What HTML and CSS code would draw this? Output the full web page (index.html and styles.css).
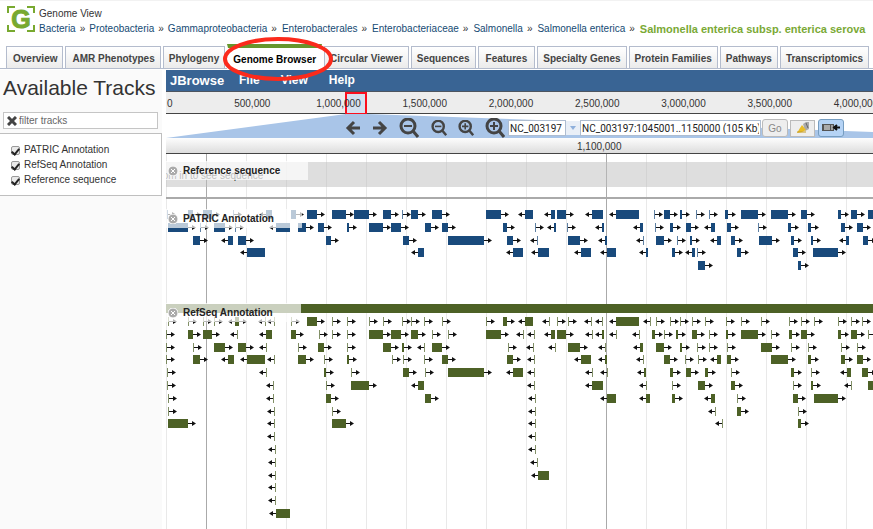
FILE: index.html
```html
<!DOCTYPE html>
<html lang="en">
<head>
<meta charset="utf-8">
<title>Genome View</title>
<link rel="stylesheet" href="styles.css">
</head>
<body>
<header class="page-header">
  <svg class="logo" viewBox="0 0 28 26" aria-hidden="true">
    <path d="M1 7V1h7M20 1h7v6M27 19v6h-7M8 25H1v-6"/>
    <text x="14" y="22">G</text>
  </svg>
  <div class="heading">
    <div class="view-name">Genome View</div>
    <nav class="crumbs"><a href="#">Bacteria</a><i>»</i><a href="#">Proteobacteria</a><i>»</i><a href="#">Gammaproteobacteria</a><i>»</i><a href="#">Enterobacterales</a><i>»</i><a href="#">Enterobacteriaceae</a><i>»</i><a href="#">Salmonella</a><i>»</i><a href="#">Salmonella enterica</a><i>»</i><a href="#" class="current">Salmonella enterica subsp. enterica serova</a></nav>
  </div>
</header>
<nav class="tabs">
  <a href="#" class="roomy">Overview</a><a href="#" class="roomy">AMR Phenotypes</a><a href="#">Phylogeny</a><a href="#" class="active">Genome Browser</a><a href="#">Circular Viewer</a><a href="#">Sequences</a><a href="#" class="wide">Features</a><a href="#">Specialty Genes</a><a href="#">Protein Families</a><a href="#">Pathways</a><a href="#">Transcriptomics</a>
  <svg class="ring" viewBox="0 0 112 46" aria-hidden="true"><ellipse cx="56" cy="23" rx="53" ry="20"/></svg>
</nav>
<main class="workspace">
  <aside class="sidebar">
    <h1>Available Tracks</h1>
    <div class="filter">
      <svg viewBox="0 0 10 10" aria-hidden="true"><path d="M1 1l8 8M9 1L1 9"/></svg>
      <input type="text" placeholder="filter tracks" aria-label="filter tracks">
    </div>
    <div class="track-list">
      <label><input type="checkbox" checked>PATRIC Annotation</label>
      <label><input type="checkbox" checked>RefSeq Annotation</label>
      <label><input type="checkbox" checked>Reference sequence</label>
    </div>
  </aside>
  <section class="browser">
    <div class="menubar"><b>JBrowse</b><button>File</button><button>View</button><button>Help</button></div>
    <div class="overview">
      <span>0</span><span>500,000</span><span>1,000,000</span><span>1,500,000</span><span>2,000,000</span><span>2,500,000</span><span>3,000,000</span><span>3,500,000</span><span>4,000,000</span>
      <div class="region"></div>
    </div>
    <div class="controls">
      <svg class="trapezoid" aria-hidden="true"><path d="M0 24L180 0H201L880 24z"/></svg>
      <button class="icon" aria-label="Pan left"><svg viewBox="0 0 16 16"><path d="M15 8H3M9 2L3 8l6 6"/></svg></button>
      <button class="icon" aria-label="Pan right"><svg viewBox="0 0 16 16"><path d="M1 8h12M7 2l6 6-6 6"/></svg></button>
      <button class="icon large" aria-label="Zoom out fully"><svg viewBox="0 0 20 20"><circle cx="9" cy="8" r="7"/><path d="M14 13l5 6"/><path class="thin" d="M5 8h8"/></svg></button>
      <button class="icon" aria-label="Zoom out"><svg viewBox="0 0 20 20"><circle cx="9" cy="8" r="7"/><path d="M14 13l5 6"/><path class="thin" d="M5 8h8"/></svg></button>
      <button class="icon" aria-label="Zoom in"><svg viewBox="0 0 20 20"><circle cx="9" cy="8" r="7"/><path d="M14 13l5 6"/><path class="thin" d="M5 8h8M9 4v8"/></svg></button>
      <button class="icon large" aria-label="Zoom in fully"><svg viewBox="0 0 20 20"><circle cx="9" cy="8" r="7"/><path d="M14 13l5 6"/><path class="thin" d="M5 8h8M9 4v8"/></svg></button>
      <input class="refseq" type="text" value="NC_003197" aria-label="Sequence">
      <button class="drop" aria-label="Choose sequence"><svg viewBox="0 0 6 4"><path d="M0 0h6L3 4z"/></svg></button>
      <input class="location" type="text" value="NC_003197:1045001..1150000 (105 Kb)" aria-label="Location">
      <button class="go">Go</button>
      <button class="tool" aria-label="Highlight"><svg viewBox="0 0 16 14"><path d="M8 3l3-2h3v7l-4 2z" fill="#aaa"/><path d="M11 2l2 5" stroke="#666"/><path d="M7 4l4 5-4 2-5 1 3-5z" fill="#e9bd28"/><path d="M2 11h9" stroke="#c39a25"/></svg></button>
      <button class="tool on" aria-label="Toggle panel"><svg viewBox="0 0 18 12"><path d="M0 2h12v7H0z" fill="#555"/><path d="M2 3h6v5H2z" fill="#aaa"/><path d="M10 3v5" stroke="#eee"/><path d="M18 5.500h-5M15 3l-3 2.500L15 8" stroke="#111" stroke-width="2" fill="none"/></svg></button>
    </div>
    <div class="scale"><span>1,100,000</span></div>
    <div class="tracks">
      <div class="track reference">
        <div class="band">Zoom in to see sequence</div>
        <div class="label"><svg viewBox="0 0 10 10"><circle cx="5" cy="5" r="5"/><path d="M3 3l4 4M7 3L3 7"/></svg>Reference sequence</div>
      </div>
      <div class="track patric">
        <svg class="features" id="patric"></svg>
        <div class="label"><svg viewBox="0 0 10 10"><circle cx="5" cy="5" r="5"/><path d="M3 3l4 4M7 3L3 7"/></svg>PATRIC Annotation</div>
      </div>
      <div class="track refseq-track">
        <div class="span"></div>
        <svg class="features" id="refseq"></svg>
        <div class="label"><svg viewBox="0 0 10 10"><circle cx="5" cy="5" r="5"/><path d="M3 3l4 4M7 3L3 7"/></svg>RefSeq Annotation</div>
      </div>
    </div>
  </section>
</main>
<script src="tracks.js"></script>
</body>
</html>
```
FILE: styles.css
```css
* { box-sizing: border-box; }
body {
  margin: 0;
  min-height: 100vh;
  display: flex;
  flex-direction: column;
  overflow: hidden;
  background: #fff;
  color: #333;
  font: 10px/15px "Liberation Sans", Arial, sans-serif;
}
button, input { font: inherit; margin: 0; }
a { color: #154a73; text-decoration: none; }

.page-header {
  display: flex;
  gap: 4px;
  height: 44px;
  padding: 5px 0 0 7px;
  border-top: 1px solid #f2f2f2;
  white-space: nowrap;
}
.logo { width: 28px; height: 26px; flex: none; }
.logo path { fill: none; stroke: #78a92f; stroke-width: 2; }
.logo text {
  font: bold 25px "Liberation Sans", Arial, sans-serif;
  text-anchor: middle;
  fill: #78a92f;
  stroke: #78a92f;
  stroke-width: 1;
}
.crumbs { display: flex; line-height: 16px; }
.crumbs a:nth-of-type(n + 4) { padding-left: 1px; }
.crumbs i { font-style: normal; padding: 0 4px; }
.crumbs .current { color: #7aa935; font-size: 11px; font-weight: bold; }

.tabs {
  position: relative;
  display: flex;
  align-items: flex-end;
  gap: 2px;
  height: 25px;
  padding-left: 6px;
  border-bottom: 1px solid #b4bccd;
  white-space: nowrap;
}
.tabs a {
  flex: none;
  height: 22px;
  padding: 0 5px;
  border: 1px solid #b4bccd;
  border-bottom: 0;
  background: linear-gradient(#fff, #ebebeb);
  color: #444;
  font-weight: bold;
  line-height: 23px;
}
.tabs .roomy { padding: 0 5px 0 6px; }
.tabs .wide { padding: 0 7px; }
.tabs .active {
  height: 25px;
  margin-bottom: -1px;
  border-top: 4px solid #66962c;
  border-color: #66962c #fff #fff;
  background: #fff;
  color: #000;
}
.ring {
  position: absolute;
  z-index: 3;
  left: 222px;
  top: -8px;
  width: 112px;
  height: 46px;
}
.ring ellipse { fill: none; stroke: #fb2a1c; stroke-width: 4; }

.workspace { flex: 1; display: flex; gap: 4px; padding-top: 1px; }
.sidebar { width: 162px; flex: none; background: #fafafa; }
h1 {
  margin: 0;
  padding: 0 3px;
  color: #333;
  font-size: 21px;
  font-weight: normal;
  line-height: 36px;
  white-space: nowrap;
}
.filter {
  display: flex;
  align-items: center;
  gap: 2px;
  height: 17px;
  margin: 6px 4px 4px 3px;
  padding: 0 3px;
  border: 1px solid #c5c5c5;
  background: #fff;
}
.filter svg { width: 10px; height: 10px; flex: none; stroke: #444; stroke-width: 3; }
.filter input { width: 100%; padding: 0; border: 0; outline: 0; background: none; color: #444; }
.filter input::placeholder { color: #666; }
.track-list {
  display: flex;
  flex-direction: column;
  padding: 8px 10px;
  border: 1px solid #bfbfbf;
  border-left: 0;
  background: #fff;
}
.track-list label { display: flex; align-items: center; gap: 4px; }
.track-list input {
  appearance: none;
  width: 9px;
  height: 9px;
  margin: 2px 0 0 1px;
  border: 1px solid #999;
  border-radius: 2px;
  background: #e9e9e9;
  display: grid;
  place-items: center;
}
.track-list input:checked::after {
  content: "";
  width: 3px;
  height: 6px;
  border: solid #222;
  border-width: 0 2px 2px 0;
  rotate: 40deg;
}

.browser { flex: 1; min-width: 0; display: flex; flex-direction: column; overflow: hidden; }
.menubar {
  display: flex;
  align-items: center;
  height: 22px;
  padding-left: 4px;
  background: #396494;
  border-bottom: 1px solid #4d5560;
  color: #fff;
  font-size: 13px;
}
.menubar b { width: 60px; }
.menubar button {
  padding: 0 9px;
  margin-right: 3px;
  border: 0;
  background: none;
  color: #fff;
  font-size: 12px;
  font-weight: bold;
}
.overview {
  position: relative;
  display: flex;
  height: 22px;
  border-bottom: 1px solid #444;
  background: #ededed;
  line-height: 23px;
}
.overview span { flex: none; width: 12.2%; text-align: center; position: relative; z-index: 1; }
.overview span:first-child { width: 6.1%; padding-left: 1px; text-align: left; }
.region {
  position: absolute;
  left: 179px;
  top: 0;
  width: 22px;
  height: 23px;
  border: 2px solid #fb0f1e;
  background: #d5e1f0;
}
.controls { position: relative; display: flex; align-items: center; height: 24px; padding: 4px 0 0 179px; }
.controls > * { position: relative; flex: none; }
.controls .trapezoid { position: absolute; left: 0; top: 0; width: 100%; height: 24px; fill: #a9c5e8; }
.icon {
  width: 16px;
  height: 16px;
  margin-right: 11px;
  padding: 0;
  border: 0;
  background: none;
}
.icon svg { display: block; width: 100%; height: 100%; fill: none; stroke: #444; stroke-width: 3; }
.icon .thin { stroke-width: 2; }
.icon.large { width: 20px; height: 20px; }
.icon.large + .icon { margin-left: 1px; }
.refseq, .location {
  height: 16px;
  padding: 0 1px;
  border: 1px solid #aebdd1;
  background: #fff;
  color: #222;
  font-family: Roboto, "Liberation Sans", sans-serif;
}
.refseq { width: 58px; margin-left: -8px; }
.location { width: 181px; }
.drop { width: 14px; height: 14px; padding: 0 4px; border: 0; background: #e9eff7; }
.drop svg { display: block; width: 6px; height: 4px; fill: #8fb0dc; }
.go, .tool { border: 1px solid #bbb; background: #eee; padding: 0; }
.go { width: 26px; height: 18px; margin: 0 2px 0 1px; border-radius: 3px; color: #888; }
.tool { width: 25px; height: 17px; display: grid; place-items: center; }
.tool svg { width: 18px; height: 14px; }
.tool.on { width: 26px; height: 18px; margin-left: 3px; border-color: #769dc0; border-radius: 3px; background: #b5d3f5; }
.scale {
  height: 16px;
  border-bottom: 1px solid #444;
  background: linear-gradient(#fdfdfd, #ddd);
  line-height: 17px;
  padding-left: 411px;
}
.tracks {
  flex: 1;
  background:
    repeating-linear-gradient(to right, transparent 0 40px, #aaa 40px 41px, transparent 41px 400px),
    repeating-linear-gradient(to right, #e9e9e9 0 1px, transparent 1px 40px);
}
.track { position: relative; }
.reference { height: 45px; padding-top: 8px; border-bottom: 2px solid #aaa; }
.band {
  height: 25px;
  background: rgba(190, 190, 190, .5);
  color: #222;
  line-height: 28px;
  text-indent: -15px;
  overflow: hidden;
}
.features { display: block; width: 100%; }
.patric .features { height: 105px; fill: #194a7c; }
.refseq-track .features { height: 216px; fill: #4d6126; }
.span { height: 9px; background: #4d6126; }
.features path { fill: #111; stroke: none; }
.label {
  position: absolute;
  left: 0;
  top: 7px;
  height: 19px;
  min-width: 135px;
  display: flex;
  align-items: center;
  gap: 5px;
  padding: 0 28px 0 2px;
  background: rgba(255, 255, 255, .7);
  color: #222;
  font-weight: bold;
}
.label svg { width: 10px; height: 10px; fill: #aaa; stroke: #fff; }
.patric .label { top: 10px; }
.refseq-track .label { top: -1px; }
```
FILE: tracks.js
```js
// Each line is one layout row. Entries are "start:width" followed by the strand.
// Width is omitted for features one pixel wide. Starts count from the window edge.
const ORIGIN = 166;
const ROW_STEP = 12.8;

const patric = `
167> 188:5> 203:9> 233> 266:6< 291:5> 307:10> 332:14> 354:15> 383:8> 402> 411:7> 432:10> 486:15> 525:8< 551:4< 557:9> 592:11< 616:23< 654> 664:6> 680:2> 696> 709> 725:3> 741:17> 771:17> 801:6> 838:3> 851:6> 868:8>
168:20> 200> 214:11> 235> 276:14< 298:8> 318:6> 347:2> 369:14> 391:10> 425:6> 442:6> 503:4> 535> 554:2< 567> 602:2< 640:3< 655> 670:3> 686:5> 711:4< 727:4> 758> 788:3> 808:3> 841:4> 857:6>
193:7> 228:5< 238:8> 326:5> 403:6> 448:36> 507:6> 537< 568:12> 605:2< 643< 656:8> 677> 690:2> 717:4< 731:4> 759:13> 791:3> 811:2> 846:3< 863:5>
247:18< 418:6< 513:10< 538:11< 581:10< 607:9< 646:2< 672:3> 692:3< 697> 737:4> 793:5> 813:25>
698:7> 798:3>`;

const refseq = `
168> 188> 203> 214> 235:4< 238> 265< 274< 291> 307:10> 332> 347> 369> 383> 402> 411> 424> 442> 486> 503:4> 525:8< 549< 557> 568> 591< 602< 616:23< 650< 656> 670> 680> 692> 705> 726> 741> 761> 789> 801> 814> 838> 851> 862>
166> 188:5> 203:9> 237< 266:6< 291:5> 319> 332> 347> 369:14> 391:10> 411:7> 432> 448> 486:15> 523< 534< 551:4< 557:9> 592< 602:2< 616< 639< 652:3> 664> 676:2> 692:5> 709> 726:2> 741:17> 771> 789:3> 801:6> 838:3> 851:6> 868>
166> 193> 214:11> 238:8> 266< 298> 318:6> 347> 383:8> 402:2> 424< 432:10> 508> 533< 555< 568:12> 605< 640:3< 656:8> 680:2> 697> 709> 727> 761:11> 791> 808> 841> 857>
166> 193:7> 228:6< 247:18< 274< 298:8> 324> 347:2> 392> 403> 424> 442:6> 507:6> 534< 581:10< 605:2< 643< 664:6> 685> 698> 717:4< 727:4> 771:17> 808:3> 841:4> 857:6>
167> 266< 324:2> 351> 403:6> 425> 448:36> 513:10< 534< 592< 607< 644:2< 670:3> 686:5> 705:3> 731> 791:3> 811> 847:4< 862:6>
167> 273< 326> 351:18> 418:6< 534< 592:11< 646< 672> 698:7> 731:4> 793> 811:2> 851< 868:6>
168> 273< 326:5> 425:6> 535< 607:9< 646:4< 672:3> 711:4< 737> 793:5> 814:24>
168> 274< 332> 535< 715< 737:4> 798>
168:20> 274< 332:14> 535< 722< 798:3>
274< 535<
275< 535<
275< 537<
275< 538:11<
275<
275<
276:14<`;

function draw(id, text, firstCentre) {
  const out = [];
  text.trim().split("\n").forEach((line, row) => {
    const y = Math.round(firstCentre + row * ROW_STEP);
    for (const item of line.split(" ")) {
      const [, start, width, strand] = item.match(/(\d+):?(\d*)([<>])/);
      const x = start - ORIGIN;
      const w = Number(width) || 1;
      const thin = w === 1 ? ' opacity="0.7"' : "";
      out.push(`<rect x="${x}" y="${y - 4}" width="${w}" height="9"${thin}/>`);
      const d = strand === ">"
        ? `M${x + w} ${y}h4v-2l4 2.500l-4 2.500v-2h-4z`
        : `M${x} ${y}h-3v-2l-4 2.500l4 2.500v-2h3z`;
      out.push(`<path d="${d}"/>`);
    }
  });
  document.getElementById(id).innerHTML = out.join("");
}

draw("patric", patric, 15);
draw("refseq", refseq, 8);
```
